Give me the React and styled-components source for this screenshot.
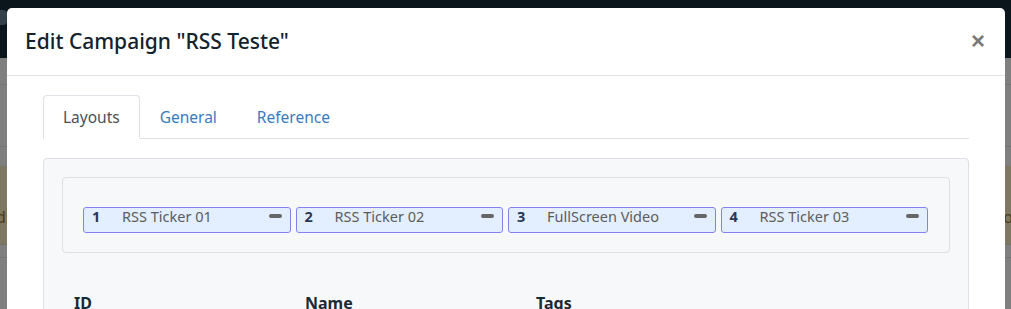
import React from 'react';
import styled, { createGlobalStyle } from 'styled-components';

const GlobalStyle = createGlobalStyle`
  html, body {
    margin: 0;
    padding: 0;
    background: #7f7f7f;
    font-family: 'Noto Sans', 'Open Sans', sans-serif;
  }
  * { box-sizing: border-box; }
`;

const layouts = [
  { id: 1, name: 'RSS Ticker 01' },
  { id: 2, name: 'RSS Ticker 02' },
  { id: 3, name: 'FullScreen Video' },
  { id: 4, name: 'RSS Ticker 03' },
];

const tabs = ['Layouts', 'General', 'Reference'];

const App = () => {
  return (
    <>
      <GlobalStyle />
      <Page>
        <NavBar>
          <NavItem />
        </NavBar>
        <BackRow $height={27} />
        <BackRow $height={62} />
        <BackGap $height={19} />
        <AlertRow>
          <AlertText>d.</AlertText>
          <AlertText>o</AlertText>
        </AlertRow>
        <BackRow $height={13} />
        <BackRow $height={60} />

        <Modal>
          <ModalHeader>
            <Title>Edit Campaign "RSS Teste"</Title>
            <CloseButton>×</CloseButton>
          </ModalHeader>
          <ModalBody>
            <TabList>
              {tabs.map((t, i) => (
                <Tab key={t} $active={i === 0}>{t}</Tab>
              ))}
            </TabList>
            <Card>
              <LayoutPanel>
                {layouts.map(l => (
                  <Chip key={l.id}>
                    <ChipNumber>{l.id}</ChipNumber>
                    <ChipName>{l.name}</ChipName>
                    <RemoveBar />
                  </Chip>
                ))}
              </LayoutPanel>
              <Table>
                <thead>
                  <tr>
                    <Th>ID</Th>
                    <Th>Name</Th>
                    <Th>Tags</Th>
                    <Th />
                  </tr>
                </thead>
              </Table>
            </Card>
          </ModalBody>
        </Modal>
      </Page>
    </>
  );
};

export default App;

const Page = styled.div`
  position: relative;
  height: 309px;
  overflow: hidden;
  background: #7f7f7f;
`;

const NavBar = styled.div`
  height: 58px;
  background: #0b151c;
  padding-top: 10px;
`;

const NavItem = styled.div`
  width: 7px;
  height: 15px;
  border-radius: 0 4px 4px 0;
  background: #33414b;
`;

const BackRow = styled.div`
  height: ${p => p.$height}px;
  border-bottom: 1px solid #737373;
`;

const BackGap = styled.div`
  height: ${p => p.$height}px;
`;

const AlertRow = styled.div`
  height: 79px;
  background: #7e7762;
  border-bottom: 1px solid #767260;
  display: flex;
  justify-content: space-between;
  align-items: flex-end;
  padding: 0 0 16px 0;
  margin-left: -4px;
  margin-right: -2px;
`;

const AlertText = styled.span`
  font-size: 16px;
  color: #4a3d1d;
`;

const Modal = styled.div`
  position: absolute;
  top: 8px;
  left: 7px;
  width: 998px;
  height: 330px;
  background: #fff;
  border-radius: 5px;
`;

const ModalHeader = styled.div`
  height: 68px;
  display: flex;
  align-items: center;
  justify-content: space-between;
  padding: 0 20px 1px 18px;
  border-bottom: 1px solid #dee2e6;
`;

const Title = styled.h5`
  margin: 0;
  font-size: 21px;
  font-weight: 500;
  color: #13222c;
`;

const CloseButton = styled.button`
  border: 0;
  background: transparent;
  padding: 0;
  font-family: 'Liberation Sans', Arial, sans-serif;
  font-size: 24px;
  font-weight: 700;
  line-height: 1;
  color: #7a7a7a;
  cursor: pointer;
`;

const ModalBody = styled.div`
  padding: 19px 36px;
`;

const TabList = styled.div`
  display: flex;
  border-bottom: 1px solid #dee2e6;
`;

const Tab = styled.div`
  height: 44px;
  margin-bottom: -1px;
  padding: 0 19px;
  display: flex;
  align-items: center;
  font-size: 15.5px;
  color: ${p => (p.$active ? '#495057' : '#3a7bc0')};
  background: ${p => (p.$active ? '#fff' : 'transparent')};
  border: 1px solid ${p => (p.$active ? '#dee2e6' : 'transparent')};
  border-bottom-color: ${p => (p.$active ? '#fff' : 'transparent')};
  border-radius: 4px 4px 0 0;
`;

const Card = styled.div`
  margin-top: 19px;
  padding: 18px;
  background: #f7f8fa;
  border: 1px solid #dcdfe3;
  border-radius: 4px;
`;

const LayoutPanel = styled.div`
  display: flex;
  gap: 5px;
  padding: 29px 21px 19px 20px;
  border: 1px solid #dcdfe3;
  border-radius: 4px;
`;

const Chip = styled.div`
  flex: 1;
  height: 26px;
  display: flex;
  align-items: center;
  padding: 0 8px 8px 8px;
  background: #e3efff;
  border: 1px solid #8282f5;
  border-radius: 3px;
`;

const ChipNumber = styled.span`
  width: 30px;
  font-size: 14.5px;
  font-weight: 700;
  color: #283857;
`;

const ChipName = styled.span`
  flex: 1;
  font-size: 14.5px;
  color: #5c5c5c;
`;

const RemoveBar = styled.span`
  width: 13px;
  height: 4px;
  border-radius: 2px;
  background: #666;
`;

const Table = styled.table`
  width: 100%;
  margin-top: 39px;
  border-collapse: collapse;
`;

const Th = styled.th`
  text-align: left;
  padding: 0 12px;
  width: 231px;
  font-size: 16px;
  font-weight: 700;
  color: #1b2a35;
  &:last-child { width: auto; }
`;
